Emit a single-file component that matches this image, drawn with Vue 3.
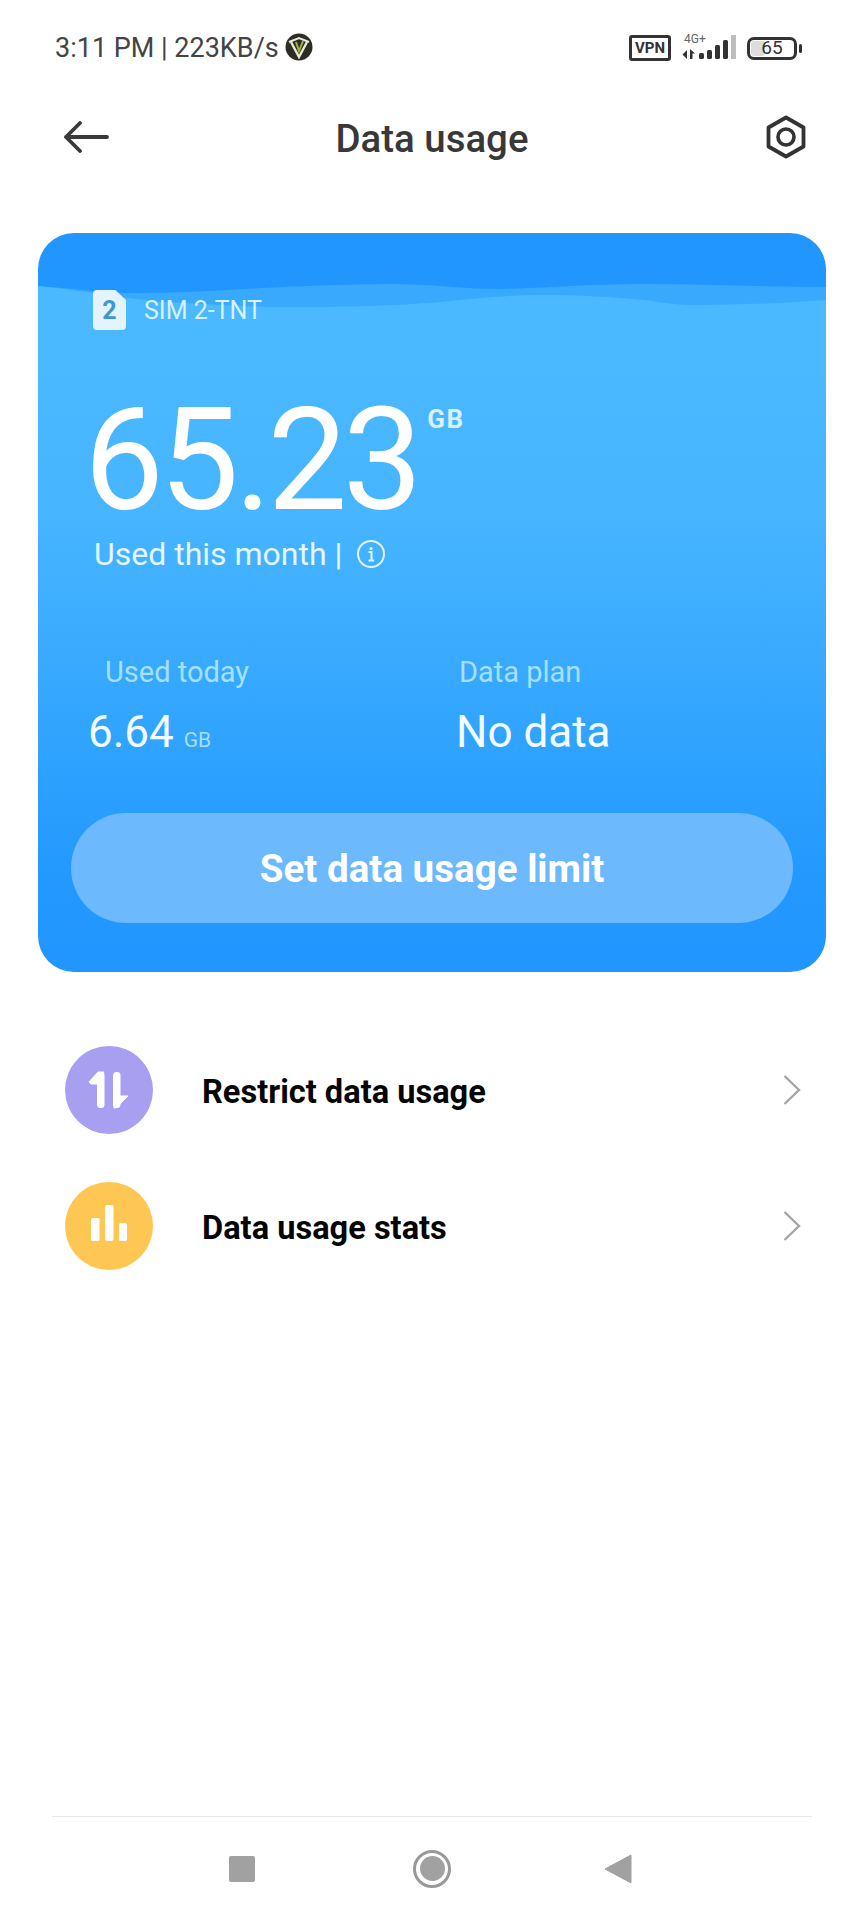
<script setup>
const rows = [
  { label: 'Restrict data usage', tone: 'purple', kind: 'arrows' },
  { label: 'Data usage stats', tone: 'yellow', kind: 'bars' },
]
</script>

<template>
  <div class="screen">
    <div class="status">
      <div class="status-left">
        <span>3:11 PM | 223KB/s</span>
        <svg class="vicon" width="28" height="28" viewBox="0 0 28 28">
          <circle cx="14" cy="14" r="13.5" fill="#2d2d26" />
          <path d="M4 9 L14 5 L24 9" fill="none" stroke="#e8e8e0" stroke-width="2" />
          <path d="M6 9 L14 24 L22 9" fill="none" stroke="#e6e8d8" stroke-width="2.4" />
          <path d="M11 9 L14 18 L18 8" fill="none" stroke="#a4b040" stroke-width="2" />
        </svg>
      </div>
      <div class="status-right">
        <div class="vpn">VPN</div>
        <svg class="signal" width="56" height="29" viewBox="0 -3 56 29">
          <text x="3" y="8" font-size="12" fill="#666" font-family="Roboto, sans-serif">4G+</text>
          <path d="M6 15v9l-4.500-4.500zM9 24v-10l5 4.500H11.500v5.500z" fill="#333" />
          <rect x="18" y="18" width="5" height="6" rx="1.500" fill="#333" />
          <rect x="26" y="15" width="5" height="9" rx="1.500" fill="#333" />
          <rect x="34" y="10" width="5" height="14" rx="1.500" fill="#333" />
          <rect x="42" y="5" width="5" height="19" rx="1.500" fill="#333" />
          <rect x="50" y="0" width="5" height="24" fill="#bdbdbd" />
        </svg>
        <div class="battery">
          <div class="battery-body"><span class="battery-fill"></span><span class="battery-text">65</span></div>
          <span class="battery-nub"></span>
        </div>
      </div>
    </div>

    <header class="header">
      <svg class="back" width="46" height="32" viewBox="0 0 46 32">
        <path d="M44 16H3M17 2 3 16l14 14" fill="none" stroke="#3a3a3a" stroke-width="3.800" stroke-linecap="round" stroke-linejoin="round" />
      </svg>
      <h1 class="title">Data usage</h1>
      <svg class="gear" width="42" height="44" viewBox="0 0 42 44">
        <path d="M21 2.500 38.500 12.500V31.500L21 41.500 3.500 31.500V12.500Z" fill="none" stroke="#333" stroke-width="3.800" stroke-linejoin="round" />
        <circle cx="21" cy="22" r="8" fill="none" stroke="#333" stroke-width="3.600" />
      </svg>
    </header>

    <section class="card">
      <svg class="waves" viewBox="0 0 788 120" preserveAspectRatio="none">
        <path d="M0 53C35 55 60 60 94 60C170 60 260 51 350 51C395 51 425 56 459 56C495 56 540 51 607 51C670 51 730 54 788 54V120H0Z" fill="#39a9fd" />
        <path d="M0 53C50 58 95 68 146 70C185 72 215 74 248 74C310 74 355 73 402 69C440 65 470 62 505 62C540 62 575 64 607 67C625 70 640 72 659 72C700 72 750 70 788 67V120H0Z" fill="#4bb9ff" />
      </svg>

      <div class="sim">
        <div class="sim-icon">2</div>
        <span>SIM 2-TNT</span>
      </div>

      <div class="big-row">
        <span class="big">65.23</span>
        <span class="big-unit">GB</span>
      </div>

      <div class="month">
        <span>Used this month |</span>
        <svg width="30" height="30" viewBox="0 0 30 30">
          <circle cx="15" cy="15" r="13" fill="none" stroke="#dff3ff" stroke-width="2" />
          <circle cx="15" cy="9.500" r="1.600" fill="#dff3ff" />
          <path d="M12.500 13H15.500V21M12.500 21.500H18" fill="none" stroke="#dff3ff" stroke-width="2" />
        </svg>
      </div>

      <div class="stats">
        <div class="stat stat-today">
          <div class="stat-label">Used today</div>
          <div class="stat-value">6.64<span class="stat-unit">GB</span></div>
        </div>
        <div class="stat stat-plan">
          <div class="stat-label">Data plan</div>
          <div class="stat-value">No data</div>
        </div>
      </div>

      <button class="limit">Set data usage limit</button>
    </section>

    <ul class="list">
      <li v-for="row in rows" :key="row.label" class="row">
        <span class="badge" :class="row.tone">
          <svg v-if="row.kind === 'arrows'" width="88" height="88" viewBox="0 0 88 88">
            <rect x="32" y="26" width="7.500" height="36" rx="3.500" fill="#fff" />
            <path d="M39 26H33L24 36 26 38H33Z" fill="#fff" stroke="#fff" stroke-linejoin="round" />
            <rect x="48" y="26" width="7.500" height="36" rx="3.500" fill="#fff" />
            <path d="M49 50H63L51 62H49Z" fill="#fff" stroke="#fff" stroke-linejoin="round" />
          </svg>
          <svg v-else width="88" height="88" viewBox="0 0 88 88">
            <rect x="26" y="36" width="8.500" height="23" rx="1.500" fill="#fff" />
            <rect x="40" y="23" width="8.500" height="36" rx="2" fill="#fff" />
            <rect x="54" y="41" width="8" height="18" rx="1.500" fill="#fff" />
          </svg>
        </span>
        <span class="row-label">{{ row.label }}</span>
        <svg class="chev" width="20" height="32" viewBox="0 0 20 32">
          <path d="M2.500 2 17 16 2.500 30" fill="none" stroke="#a6a6a6" stroke-width="2.400" />
        </svg>
      </li>
    </ul>

    <footer class="nav">
      <span class="nav-square"></span>
      <span class="nav-home"><span class="nav-dot"></span></span>
      <svg width="28" height="30" viewBox="0 0 28 30">
        <path d="M27 1V29L1 15Z" fill="#a1a1a1" stroke="#a1a1a1" stroke-width="1" stroke-linejoin="round" />
      </svg>
    </footer>
  </div>
</template>

<style scoped>
.screen {
  width: 864px;
  height: 1920px;
  display: flex;
  flex-direction: column;
  background: #fff;
  font-family: Roboto, "Liberation Sans", sans-serif;
  overflow: hidden;
}
.status {
  height: 96px;
  flex: none;
  display: flex;
  align-items: center;
  justify-content: space-between;
  padding: 0 62px 0 55px;
  color: #444;
  font-size: 27px;
}
.status-left { display: flex; align-items: center; gap: 6px; }
.vicon { margin-top: -2px; }
.status-right { display: flex; align-items: center; }
.vpn {
  width: 42px;
  height: 26px;
  box-sizing: border-box;
  border: 3px solid #333;
  border-radius: 3px;
  font-size: 15px;
  font-weight: 700;
  line-height: 20px;
  text-align: center;
  color: #333;
}
.signal { margin: 0 0 3px 10px; }
.battery { display: flex; align-items: center; margin-left: 10px; gap: 2px; }
.battery-body {
  position: relative;
  width: 50px;
  height: 23px;
  box-sizing: border-box;
  border: 3.5px solid #333;
  border-radius: 7px;
  display: flex;
  align-items: center;
  justify-content: center;
}
.battery-fill {
  position: absolute;
  left: 1px;
  top: 1px;
  bottom: 1px;
  width: 14px;
  background: #ddd;
  border-radius: 3px;
}
.battery-text { position: relative; font-size: 19px; color: #333; line-height: 16px; }
.battery-nub { width: 3px; height: 9px; background: #333; border-radius: 2px; }

.header {
  position: relative;
  height: 82px;
  flex: none;
  display: flex;
  align-items: center;
  justify-content: space-between;
  padding: 0 57px 0 63px;
}
.title {
  margin: 0;
  padding-top: 2px;
  font-size: 38.4px;
  font-weight: 500;
  color: #383838;
  position: absolute;
  left: 0;
  right: 0;
  text-align: center;
}

.card {
  position: relative;
  flex: none;
  margin: 55px 38px 0;
  height: 739px;
  box-sizing: border-box;
  border-radius: 36px;
  overflow: hidden;
  color: #fff;
  background: linear-gradient(180deg, #2196ff 0, #2196ff 60px, #4bb9ff 100px, #47b5ff 280px, #2399fe 640px, #2196fe 100%);
  display: flex;
  flex-direction: column;
}
.waves {
  position: absolute;
  left: 0;
  top: 0;
  width: 788px;
  height: 120px;
}
.card > *:not(.waves) { position: relative; }
.sim {
  margin: 57px 0 0 55px;
  height: 40px;
  display: flex;
  align-items: center;
  gap: 18px;
  font-size: 25px;
  color: #d7f1ff;
}
.sim-icon {
  width: 33px;
  height: 40px;
  background: #e3f4fe;
  border-radius: 4px;
  clip-path: polygon(0 0, 68% 0, 100% 25%, 100% 100%, 0 100%);
  color: #3f97d3;
  font-size: 25px;
  font-weight: 700;
  line-height: 42px;
  text-align: center;
}
.big-row {
  margin: 77px 0 0 46px;
  display: flex;
  align-items: flex-start;
}
.big {
  font-size: 142px;
  font-weight: 400;
  line-height: 108px;
  letter-spacing: -4.5px;
}
.big-unit {
  margin: -2px 0 0 9px;
  font-size: 26px;
  font-weight: 700;
  line-height: 28px;
  letter-spacing: 1.5px;
  color: #d8f0ff;
}
.month {
  margin: 19px 0 0 56px;
  display: flex;
  align-items: center;
  gap: 14px;
  font-size: 32px;
  line-height: 40px;
  color: #e4f6ff;
}
.stats { margin-top: 80px; display: flex; }
.stat-today { width: 366px; padding-left: 50px; box-sizing: border-box; }
.stat-plan { padding-left: 52px; }
.stat-label {
  margin-left: 17px;
  font-size: 29px;
  line-height: 36px;
  color: #a6e0ff;
}
.stat-plan .stat-label { margin-left: 3px; }
.stat-value {
  margin-top: 16px;
  font-size: 44px;
  line-height: 52px;
  color: #f4fbff;
}
.stat-unit { margin-left: 10px; font-size: 21px; color: #a6e0ff; }
.limit {
  margin: 47px 33px 0;
  height: 110px;
  flex: none;
  border: none;
  border-radius: 56px;
  background: #6cb9fd;
  color: #fff;
  font-family: inherit;
  font-size: 38.6px;
  font-weight: 700;
}

.list { list-style: none; margin: 50px 0 0; padding: 0 62px 0 65px; }
.row { height: 136px; display: flex; align-items: center; }
.badge {
  width: 88px;
  height: 88px;
  border-radius: 50%;
  display: flex;
  align-items: center;
  justify-content: center;
  flex: none;
}
.purple { background: #a99ff0; }
.yellow { background: #fec653; }
.row-label {
  flex: 1;
  margin-left: 49px;
  padding-top: 4px;
  font-size: 32.6px;
  font-weight: 700;
  color: #050505;
}

.nav {
  margin: auto 52px 0;
  height: 104px;
  flex: none;
  box-sizing: border-box;
  border-top: 1px solid #e8e8e8;
  display: flex;
  align-items: center;
  justify-content: space-between;
  padding: 0 180px 0 177px;
}
.nav-square { width: 26px; height: 26px; border-radius: 2px; background: #a1a1a1; }
.nav-home {
  width: 38px;
  height: 38px;
  margin-left: 5px;
  box-sizing: border-box;
  border: 3.500px solid #999;
  border-radius: 50%;
  display: flex;
  align-items: center;
  justify-content: center;
}
.nav-dot { width: 25px; height: 25px; border-radius: 50%; background: #a1a1a1; }
</style>
